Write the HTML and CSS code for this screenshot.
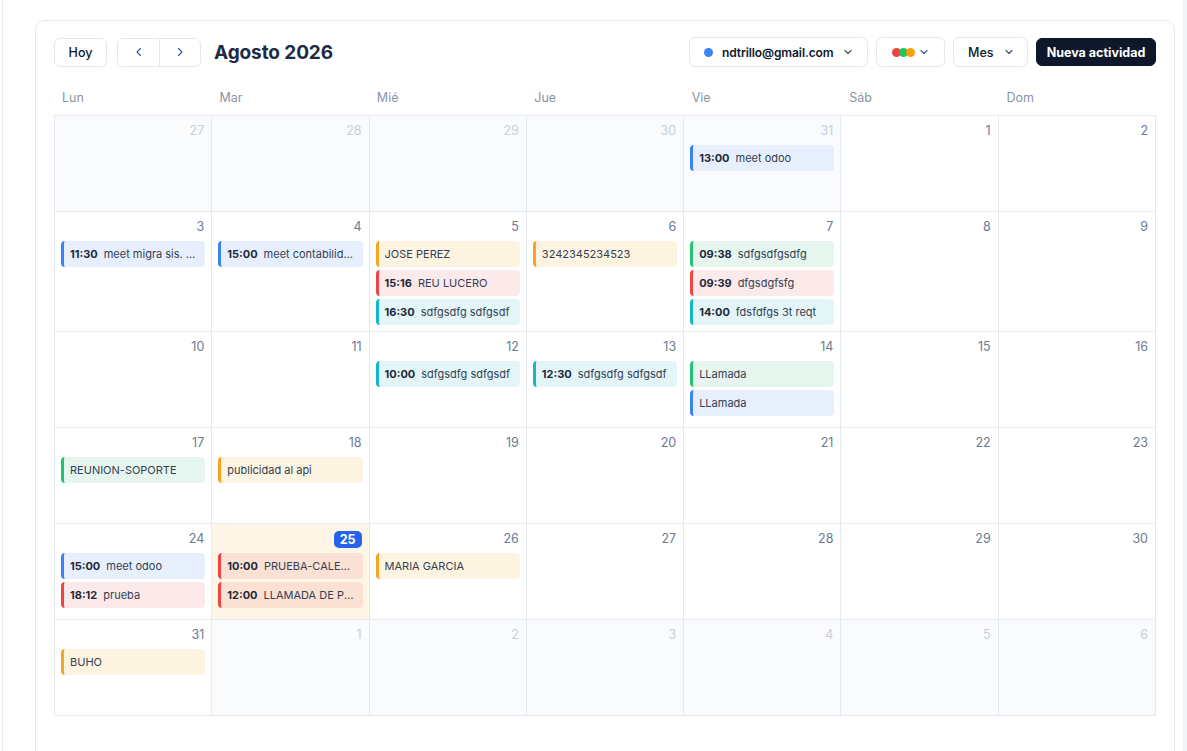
FILE: index.html
```html
<!DOCTYPE html>
<html lang="es">
<head>
<meta charset="utf-8">
<title>Calendario</title>
<link rel="stylesheet" href="styles.css">
</head>
<body>
<div class="app">
  <main class="main">
    <section class="card">
      <header class="toolbar">
        <div class="tb-left">
          <button class="btn">Hoy</button>
          <div class="nav-group">
            <button class="nav-btn" aria-label="Anterior"><svg width="12" height="12" viewBox="0 0 12 12"><path d="M7.5 2.5 4 6l3.5 3.5" fill="none" stroke="#3b5ba8" stroke-width="1.2" stroke-linecap="round" stroke-linejoin="round"/></svg></button>
            <button class="nav-btn" aria-label="Siguiente"><svg width="12" height="12" viewBox="0 0 12 12"><path d="M4.5 2.5 8 6l-3.5 3.5" fill="none" stroke="#3b5ba8" stroke-width="1.2" stroke-linecap="round" stroke-linejoin="round"/></svg></button>
          </div>
          <h1 class="title">Agosto 2026</h1>
        </div>
        <div class="tb-right">
          <button class="btn dd email"><span class="dot-blue"></span><span class="email-text">ndtrillo@gmail.com</span><svg class="chev" width="12" height="12" viewBox="0 0 12 12"><path d="M3 4.5 6 7.5l3-3" fill="none" stroke="#475569" stroke-width="1.2" stroke-linecap="round" stroke-linejoin="round"/></svg></button>
          <button class="btn dd colors"><span class="dots"><span class="c c-red"></span><span class="c c-green"></span><span class="c c-orange"></span></span><svg class="chev" width="12" height="12" viewBox="0 0 12 12"><path d="M3 4.5 6 7.5l3-3" fill="none" stroke="#3b5ba8" stroke-width="1.2" stroke-linecap="round" stroke-linejoin="round"/></svg></button>
          <button class="btn dd mes">Mes<svg class="chev" width="12" height="12" viewBox="0 0 12 12"><path d="M3 4.5 6 7.5l3-3" fill="none" stroke="#475569" stroke-width="1.2" stroke-linecap="round" stroke-linejoin="round"/></svg></button>
          <button class="btn primary">Nueva actividad</button>
        </div>
      </header>

      <div class="weekdays">
        <div>Lun</div><div>Mar</div><div>Mié</div><div>Jue</div><div>Vie</div><div>Sáb</div><div>Dom</div>
      </div>

      <div class="grid">
        <!-- week 1 -->
        <div class="cell out"><div class="num">27</div></div>
        <div class="cell out"><div class="num">28</div></div>
        <div class="cell out"><div class="num">29</div></div>
        <div class="cell out"><div class="num">30</div></div>
        <div class="cell out"><div class="num">31</div>
          <div class="ev blue"><b>13:00</b><span>meet odoo</span></div>
        </div>
        <div class="cell"><div class="num">1</div></div>
        <div class="cell"><div class="num">2</div></div>

        <!-- week 2 -->
        <div class="cell"><div class="num">3</div>
          <div class="ev blue"><b>11:30</b><span>meet migra sis. odoo nuevo</span></div>
        </div>
        <div class="cell"><div class="num">4</div>
          <div class="ev blue"><b>15:00</b><span>meet contabilidad general</span></div>
        </div>
        <div class="cell"><div class="num">5</div>
          <div class="ev orange"><span>JOSE PEREZ</span></div>
          <div class="ev red"><b>15:16</b><span>REU LUCERO</span></div>
          <div class="ev teal"><b>16:30</b><span>sdfgsdfg sdfgsdf</span></div>
        </div>
        <div class="cell"><div class="num">6</div>
          <div class="ev orange"><span>3242345234523</span></div>
        </div>
        <div class="cell"><div class="num">7</div>
          <div class="ev green"><b>09:38</b><span>sdfgsdfgsdfg</span></div>
          <div class="ev red"><b>09:39</b><span>dfgsdgfsfg</span></div>
          <div class="ev teal"><b>14:00</b><span>fdsfdfgs 3t reqt</span></div>
        </div>
        <div class="cell"><div class="num">8</div></div>
        <div class="cell"><div class="num">9</div></div>

        <!-- week 3 -->
        <div class="cell"><div class="num">10</div></div>
        <div class="cell"><div class="num">11</div></div>
        <div class="cell"><div class="num">12</div>
          <div class="ev teal"><b>10:00</b><span>sdfgsdfg sdfgsdf</span></div>
        </div>
        <div class="cell"><div class="num">13</div>
          <div class="ev teal"><b>12:30</b><span>sdfgsdfg sdfgsdf</span></div>
        </div>
        <div class="cell"><div class="num">14</div>
          <div class="ev green"><span>LLamada</span></div>
          <div class="ev blue"><span>LLamada</span></div>
        </div>
        <div class="cell"><div class="num">15</div></div>
        <div class="cell"><div class="num">16</div></div>

        <!-- week 4 -->
        <div class="cell"><div class="num">17</div>
          <div class="ev green"><span>REUNION-SOPORTE</span></div>
        </div>
        <div class="cell"><div class="num">18</div>
          <div class="ev orange"><span>publicidad al api</span></div>
        </div>
        <div class="cell"><div class="num">19</div></div>
        <div class="cell"><div class="num">20</div></div>
        <div class="cell"><div class="num">21</div></div>
        <div class="cell"><div class="num">22</div></div>
        <div class="cell"><div class="num">23</div></div>

        <!-- week 5 -->
        <div class="cell"><div class="num">24</div>
          <div class="ev blue"><b>15:00</b><span>meet odoo</span></div>
          <div class="ev red"><b>18:12</b><span>prueba</span></div>
        </div>
        <div class="cell today"><div class="num"><span class="badge">25</span></div>
          <div class="ev red today-ev"><b>10:00</b><span>PRUEBA-CALENDARIO</span></div>
          <div class="ev red today-ev"><b>12:00</b><span>LLAMADA DE PRUEBA</span></div>
        </div>
        <div class="cell"><div class="num">26</div>
          <div class="ev orange"><span>MARIA GARCIA</span></div>
        </div>
        <div class="cell"><div class="num">27</div></div>
        <div class="cell"><div class="num">28</div></div>
        <div class="cell"><div class="num">29</div></div>
        <div class="cell"><div class="num">30</div></div>

        <!-- week 6 -->
        <div class="cell"><div class="num">31</div>
          <div class="ev orange"><span>BUHO</span></div>
        </div>
        <div class="cell out"><div class="num">1</div></div>
        <div class="cell out"><div class="num">2</div></div>
        <div class="cell out"><div class="num">3</div></div>
        <div class="cell out"><div class="num">4</div></div>
        <div class="cell out"><div class="num">5</div></div>
        <div class="cell out"><div class="num">6</div></div>
      </div>
    </section>
  </main>
  <div class="strip"></div>
</div>
</body>
</html>
```

FILE: styles.css
```css
* { box-sizing: border-box; }
html, body { margin: 0; padding: 0; height: 100%; }
body {
  font-family: Inter, "Noto Sans", "Liberation Sans", sans-serif;
  background: #ffffff;
  color: #1e293b;
  overflow: hidden;
}
.app {
  display: flex;
  height: 751px;
  padding-left: 2px;
}
.main {
  flex: 1;
  border-left: 1px solid #e8ecf2;
  padding: 20px 0 0 32px;
}
.strip {
  width: 4px;
  background: #f3f4f6;
  border-left: 1px solid #eceef2;
}
.card {
  width: 1140px;
  height: 760px;
  border: 1px solid #e6eaf0;
  border-radius: 10px;
  padding: 16px 18px 18px 18px;
  background: #fff;
}
.toolbar {
  display: flex;
  justify-content: space-between;
  align-items: center;
  height: 30px;
}
.tb-left, .tb-right { display: flex; align-items: center; }
.tb-right { gap: 8px; }
.btn {
  font-family: inherit;
  height: 30px;
  border: 1px solid #e2e8f0;
  border-radius: 6px;
  background: #fff;
  font-size: 12.5px;
  font-weight: 500;
  color: #0f172a;
  padding: 0 14px;
  display: inline-flex;
  align-items: center;
  cursor: pointer;
}
.tb-left .btn { height: 29px; width: 53px; justify-content: center; padding: 0; }
.nav-group {
  display: flex;
  margin-left: 10px;
  border: 1px solid #e2e8f0;
  border-radius: 6px;
  height: 29px;
  overflow: hidden;
}
.nav-btn {
  width: 41px;
  border: 0;
  background: #fff;
  display: flex;
  align-items: center;
  justify-content: center;
  padding: 0;
}
.nav-btn + .nav-btn { border-left: 1px solid #e2e8f0; }
.title {
  margin: 0 0 0 13px;
  font-size: 19px;
  font-weight: 700;
  color: #1e2b44;
  letter-spacing: -0.1px;
}
.dd .chev { margin-left: 8px; }
.email { width: 179px; padding: 0 0 0 14px; font-weight: 600; font-size: 12px; }
.email-text { letter-spacing: -0.1px; }
.email .chev { margin-left: 9px; }
.dot-blue {
  width: 9px; height: 9px; border-radius: 50%;
  background: #3b82f6; margin-right: 9px;
}
.colors { width: 69px; padding: 0 0 0 15px; }
.dots { display: flex; }
.c { width: 9px; height: 9px; border-radius: 50%; display: block; }
.c + .c { margin-left: -2px; }
.c-red { background: #ef4444; }
.c-green { background: #22c55e; }
.c-orange { background: #f59e0b; }
.colors .chev { margin-left: 3px; }
.mes { width: 75px; padding: 0 0 0 14px; }
.mes .chev { margin-left: 10px; }
.primary {
  background: #0f172a;
  border-color: #0f172a;
  color: #fff;
  font-weight: 700;
  height: 28px;
  width: 120px;
  justify-content: center;
  padding: 0;
}

.weekdays {
  display: grid;
  grid-template-columns: repeat(7, 1fr);
  margin-top: 14px;
  height: 34px;
  align-items: center;
  font-size: 12.5px;
  color: #8a94a6;
}
.weekdays div { padding-left: 8px; padding-bottom: 2px; }

.grid {
  display: grid;
  grid-template-columns: repeat(7, 1fr);
  border-top: 1px solid #e5e9f0;
  border-left: 1px solid #e5e9f0;
}
.cell {
  min-height: 96px;
  border-right: 1px solid #e5e9f0;
  border-bottom: 1px solid #e5e9f0;
  padding: 6px 6px 6px 6px;
  display: flex;
  flex-direction: column;
  gap: 3px;
  min-width: 0;
}
.cell.out { background: #f9fbfd; }
.cell.today { background: #fdf5e5; }
.num {
  text-align: right;
  font-size: 12.5px;
  line-height: 18px;
  height: 18px;
  color: #6b7a90;
  padding-right: 1px;
  margin-bottom: 2px;
}
.out .num { color: #c7cfdb; }
.badge {
  display: inline-block;
  background: #2563eb;
  color: #fff;
  font-weight: 700;
  font-size: 12.5px;
  line-height: 17px;
  height: 17px;
  padding: 0 6px;
  border-radius: 5px;
  margin-top: 1px;
}
.ev {
  height: 26px;
  flex: none;
  border-radius: 4px;
  border-left: 3px solid;
  display: flex;
  align-items: center;
  padding: 0 8px 0 6px;
  font-size: 11px;
  color: #334155;
  white-space: nowrap;
  overflow: hidden;
  min-width: 0;
}
.ev b { font-weight: 700; color: #1e293b; margin-right: 6px; flex: none; }
.ev span { overflow: hidden; text-overflow: ellipsis; flex: 1 1 auto; min-width: 0; }
.ev.blue { border-color: #3b82f6; background: #e7effc; }
.ev.orange { border-color: #f5a524; background: #fdf3e1; }
.ev.red { border-color: #ef4444; background: #fce9e9; }
.ev.teal { border-color: #14b8c4; background: #e3f5f6; }
.ev.green { border-color: #22c36e; background: #e6f6ee; }
.ev.today-ev { background: #fbe1d3; }
```
